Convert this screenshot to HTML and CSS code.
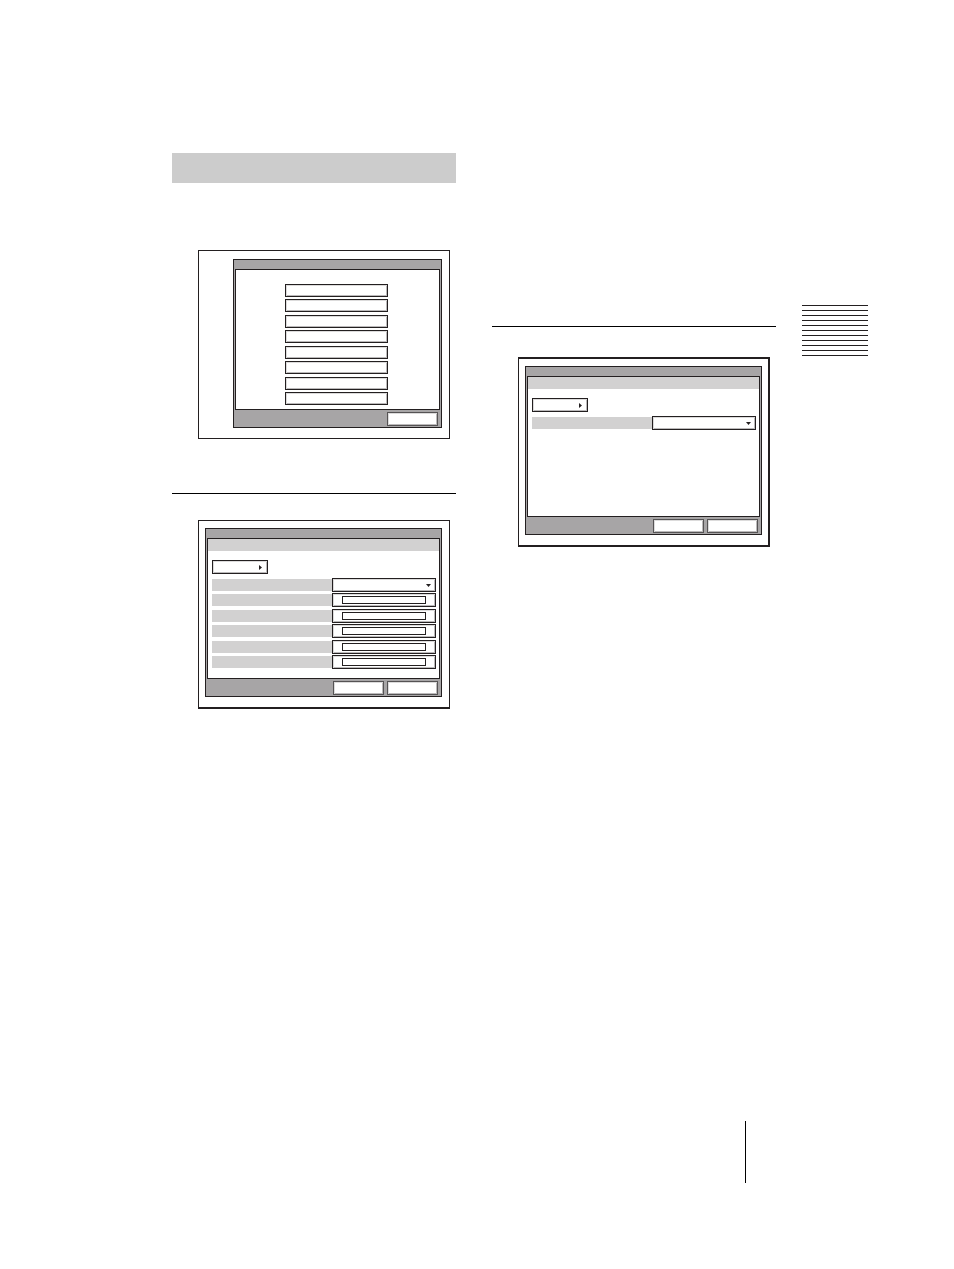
FILE: index.html
```html
<!DOCTYPE html>
<html lang="en">
<head>
  <meta charset="UTF-8">
  <meta name="viewport" content="width=device-width, initial-scale=1.0">
  <title>Setup Menus</title>
  <link rel="stylesheet" href="styles.css">
</head>
<body>
  <div class="page">
    <main class="columns">
      <!-- left column -->
      <section class="column">
        <div class="heading-bar"></div>

        <div class="frame frame-menu">
          <div class="screen">
            <div class="title-bar"></div>
            <div class="panel menu-list">
              <button class="btn" aria-label="Menu item 1"></button>
              <button class="btn" aria-label="Menu item 2"></button>
              <button class="btn" aria-label="Menu item 3"></button>
              <button class="btn" aria-label="Menu item 4"></button>
              <button class="btn" aria-label="Menu item 5"></button>
              <button class="btn" aria-label="Menu item 6"></button>
              <button class="btn" aria-label="Menu item 7"></button>
              <button class="btn" aria-label="Menu item 8"></button>
            </div>
            <div class="button-bar">
              <button class="btn btn-action" aria-label="Close"></button>
            </div>
          </div>
        </div>

        <hr class="rule">

        <div class="frame frame-settings">
          <div class="screen">
            <div class="title-bar"></div>
            <div class="panel">
              <div class="band"></div>
              <div class="panel-body">
                <button class="btn btn-sub" aria-label="Submenu">
                  <svg width="3" height="5" viewBox="0 0 3 5"><path d="M0 0L3 2.5L0 5Z" fill="#231f20"/></svg>
                </button>
                <div class="rows">
                  <div class="row">
                    <label class="row-label" for="mode"></label>
                    <div class="control select-box">
                      <select id="mode" class="btn" aria-label="Mode"></select>
                      <svg class="caret" width="5" height="3" viewBox="0 0 5 3"><path d="M0 0H5L2.5 3Z" fill="#231f20"/></svg>
                    </div>
                  </div>
                  <div class="row">
                    <label class="row-label" for="field-1"></label>
                    <div class="control btn"><input id="field-1" class="field" type="text" aria-label="Field 1"></div>
                  </div>
                  <div class="row">
                    <label class="row-label" for="field-2"></label>
                    <div class="control btn"><input id="field-2" class="field" type="text" aria-label="Field 2"></div>
                  </div>
                  <div class="row">
                    <label class="row-label" for="field-3"></label>
                    <div class="control btn"><input id="field-3" class="field" type="text" aria-label="Field 3"></div>
                  </div>
                  <div class="row">
                    <label class="row-label" for="field-4"></label>
                    <div class="control btn"><input id="field-4" class="field" type="text" aria-label="Field 4"></div>
                  </div>
                  <div class="row">
                    <label class="row-label" for="field-5"></label>
                    <div class="control btn"><input id="field-5" class="field" type="text" aria-label="Field 5"></div>
                  </div>
                </div>
              </div>
            </div>
            <div class="button-bar">
              <button class="btn btn-action" aria-label="Cancel"></button>
              <button class="btn btn-action" aria-label="OK"></button>
            </div>
          </div>
        </div>
      </section>

      <!-- right column -->
      <section class="column column-right">
        <hr class="rule">

        <div class="frame frame-single">
          <div class="screen">
            <div class="title-bar"></div>
            <div class="panel">
              <div class="band"></div>
              <div class="panel-body">
                <button class="btn btn-sub" aria-label="Submenu">
                  <svg width="3" height="5" viewBox="0 0 3 5"><path d="M0 0L3 2.5L0 5Z" fill="#231f20"/></svg>
                </button>
                <div class="rows">
                  <div class="row">
                    <label class="row-label" for="option"></label>
                    <div class="control select-box">
                      <select id="option" class="btn" aria-label="Option"></select>
                      <svg class="caret" width="5" height="3" viewBox="0 0 5 3"><path d="M0 0H5L2.5 3Z" fill="#231f20"/></svg>
                    </div>
                  </div>
                </div>
              </div>
            </div>
            <div class="button-bar">
              <button class="btn btn-action" aria-label="Cancel"></button>
              <button class="btn btn-action" aria-label="OK"></button>
            </div>
          </div>
        </div>
      </section>
    </main>

    <aside class="chapter-tab"></aside>
  </div>

  <footer class="page-footer">
    <div class="footer-line"></div>
  </footer>
</body>
</html>
```
FILE: styles.css
```css
* {
  box-sizing: border-box;
}

body {
  margin: 0;
  min-height: 100vh;
  display: flex;
  flex-direction: column;
  background: #fff;
  font-family: "Liberation Sans", Arial, sans-serif;
  font-size: 8px;
}

.page {
  display: flex;
  gap: 26px;
  padding: 153px 86px 0 172px;
}

.columns {
  flex: 1;
  display: grid;
  grid-template-columns: 1fr 1fr;
  gap: 36px;
}

.column-right {
  padding-top: 173px;
}

.heading-bar {
  height: 30px;
  margin-bottom: 67px;
  background: #ccc;
}

.rule {
  height: 1px;
  margin: 0;
  border: 0;
  background: #000;
}

/* framed screens */
.frame {
  margin: 0 6px 0 26px;
  border: 1px solid #231f20;
}

.frame-menu {
  margin-bottom: 54px;
  padding: 8px 7px 10px 34px;
}

.frame-settings {
  margin-top: 26px;
  padding: 7px 7px 10px 6px;
  border-bottom-width: 2px;
}

.frame-single {
  margin-top: 30px;
  padding: 7px 6px 10px;
  border-width: 2px 2px 2px 1px;
}

.screen {
  border: 1px solid #231f20;
  background: #a7a5a6;
}

.title-bar {
  height: 9px;
}

.panel {
  display: flex;
  flex-direction: column;
  min-height: 141px;
  margin: 0 1px;
  border: 1px solid #231f20;
  background: #fff;
}

.band {
  height: 12px;
  background: #d2d1d1;
}

.panel-body {
  flex: 1;
  display: flex;
  flex-direction: column;
  gap: 4px;
  padding: 9px 3px 9px 4px;
}

.button-bar {
  display: flex;
  justify-content: flex-end;
  gap: 3px;
  padding: 2px 3px 1px;
}

/* buttons */
.btn {
  display: block;
  height: 14px;
  padding: 0;
  border: 1px solid #231f20;
  border-radius: 0;
  background: #fff;
  box-shadow: inset 1px 1px #dcdbdb, inset -1px -1px #bbb9ba;
}

.btn-action {
  width: 51px;
  border-color: #555354;
}

.btn-sub {
  display: flex;
  align-items: center;
  justify-content: flex-end;
  width: 56px;
  padding-right: 5px;
}

.menu-list {
  justify-content: space-between;
  padding: 14px 51px 4px 49px;
}

.menu-list .btn {
  height: 13px;
}

/* setting rows */
.rows {
  flex: 1;
  display: flex;
  flex-direction: column;
  justify-content: space-between;
}

.row {
  display: flex;
  align-items: center;
}

.row-label {
  flex: 1;
  height: 12px;
  background: #d2d1d1;
}

.control {
  width: 104px;
}

.control.btn {
  padding: 2px 9px;
}

.field {
  display: block;
  width: 100%;
  height: 8px;
  padding: 0 2px;
  border: 1px solid #231f20;
  background: #fff;
  font-size: 6px;
}

.select-box {
  position: relative;
}

.select-box select {
  width: 100%;
  appearance: none;
}

.caret {
  position: absolute;
  top: 6px;
  right: 5px;
  pointer-events: none;
}

/* chapter mark at the page edge */
.chapter-tab {
  width: 66px;
  height: 51px;
  margin-top: 152px;
  background: repeating-linear-gradient(to bottom, #231f20 0 1px, transparent 1px 5px);
}

.page-footer {
  display: flex;
  justify-content: flex-end;
  margin-top: auto;
  padding: 0 208px 86px 0;
}

.footer-line {
  width: 1px;
  height: 62px;
  background: #000;
}
```
